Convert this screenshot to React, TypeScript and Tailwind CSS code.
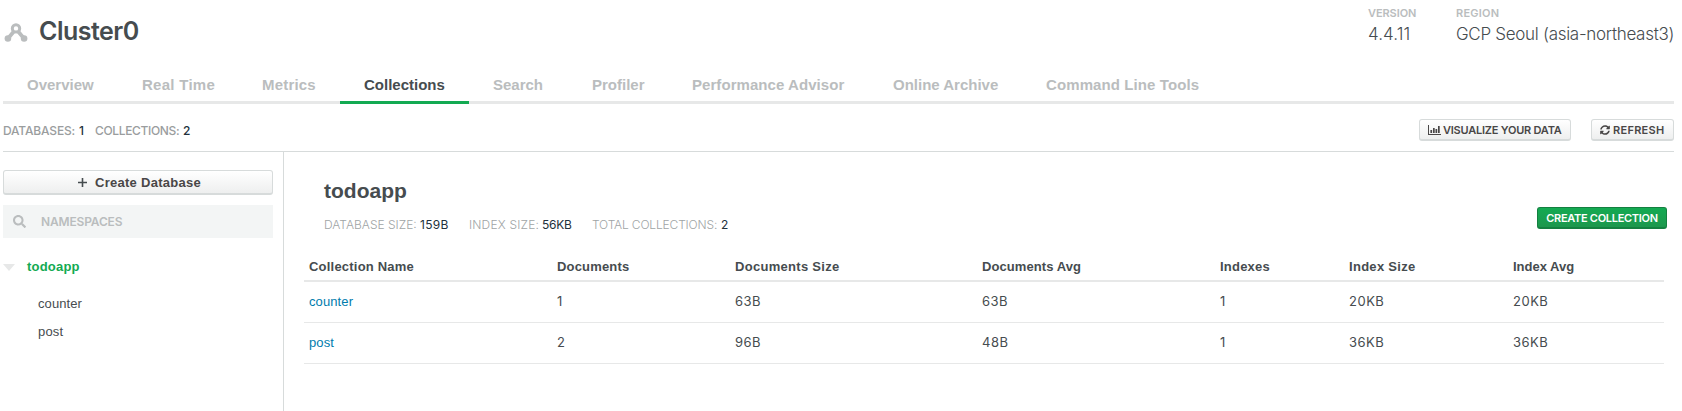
import type { ReactNode } from "react";
import { FaSearch, FaSyncAlt } from "react-icons/fa";

const tabs = [
  { label: "Overview", cls: "w-[115px]" },
  { label: "Real Time", cls: "w-[120px] tracking-[0.28px]" },
  { label: "Metrics", cls: "w-[102px] tracking-[0.19px]" },
  { label: "Collections", cls: "w-[129px]", active: true },
  { label: "Search", cls: "w-[99px]" },
  { label: "Profiler", cls: "w-[100px]" },
  { label: "Performance Advisor", cls: "w-[201px] tracking-[0.06px]" },
  { label: "Online Archive", cls: "w-[153px]" },
  { label: "Command Line Tools", cls: "w-[201px] tracking-[0.1px]" },
];

const headers = [
  { label: "Collection Name", cls: "tracking-[0.21px]" },
  { label: "Documents", cls: "tracking-[0.18px]" },
  { label: "Documents Size", cls: "tracking-[0.29px]" },
  { label: "Documents Avg", cls: "tracking-[0.08px]" },
  { label: "Indexes", cls: "tracking-[0.22px]" },
  { label: "Index Size", cls: "tracking-[0.29px]" },
  { label: "Index Avg", cls: "" },
];

const rows = [
  ["counter", "1", "63B", "63B", "1", "20KB", "20KB"],
  ["post", "2", "96B", "48B", "1", "36KB", "36KB"],
];

const columns = "grid grid-cols-[248px_178px_247px_238px_129px_164px_1fr]";

function ClusterIcon() {
  return (
    <svg width="24" height="19" viewBox="0 0 24 19" fill="none" stroke="#babdbe">
      <circle cx="12" cy="5.4" r="3.7" strokeWidth="3" />
      <path d="M9.8 8.6 L4 15.4 M14.2 8.6 L20 15.4" strokeWidth="3.8" />
      <circle cx="3.9" cy="15.5" r="3.3" fill="#babdbe" stroke="none" />
      <circle cx="20.1" cy="15.5" r="3.3" fill="#babdbe" stroke="none" />
    </svg>
  );
}

function ChartIcon() {
  return (
    <svg className="mt-px" width="13" height="11" viewBox="0 0 13 11" fill="#494747">
      <path d="M0 0h1v9h12v1H0z" />
      <path d="M2.4 5h1.7v3H2.4zM5 3h1.7v5H5zM7.5 4h1.7v4H7.5zM10 1h1.7v7H10z" />
    </svg>
  );
}

function GrayButton({ className, children }: { className: string; children: ReactNode }) {
  return (
    <button
      className={`flex items-center rounded-[3px] border border-[#d7dbdb] border-b-2 bg-gradient-to-b from-white to-[#eeefef] text-[#494747] ${className}`}
    >
      {children}
    </button>
  );
}

export default function App() {
  return (
    <div className="flex h-[411px] w-[1682px] flex-col overflow-hidden bg-white pr-2 pl-[3px] font-['Liberation_Sans',sans-serif] text-[#464c4f]">
      <header className="flex h-[60px] shrink-0 justify-between">
        <div className="flex pl-[1px]">
          <div className="pt-[23px]">
            <ClusterIcon />
          </div>
          <h1 className="pt-[14px] pl-[11px] font-['Inter',sans-serif] text-[25px] leading-[34px] font-semibold tracking-[-0.5px]">
            Cluster0
          </h1>
        </div>
        <div className="flex font-['Inter',sans-serif]">
          <div className="w-[88px]">
            <div className="mt-[5px] text-[11px] leading-4 font-semibold tracking-[-0.08px] text-[#babdbe]">VERSION</div>
            <div className="mt-[2px] text-[17px] leading-[22px] font-light tracking-[0.09px]">4.4.11</div>
          </div>
          <div className="w-[218px]">
            <div className="mt-[5px] text-[11px] leading-4 font-semibold tracking-[0.23px] text-[#babdbe]">REGION</div>
            <div className="mt-[2px] text-[17px] leading-[22px] font-light tracking-[-0.29px] whitespace-nowrap">
              GCP Seoul (asia-northeast3)
            </div>
          </div>
        </div>
      </header>

      <nav className="flex h-[44px] shrink-0 border-b-[3px] border-[#e7e8e8] text-[15px] leading-5 font-bold text-[#babdbe]">
        {tabs.map((t) => (
          <a
            key={t.label}
            className={`h-[44px] shrink-0 pt-[15px] pl-6 whitespace-nowrap ${t.cls} ${
              t.active ? "border-b-[3px] border-[#13aa52] text-[#464c4f]" : ""
            }`}
          >
            {t.label}
          </a>
        ))}
      </nav>

      <div className="flex h-12 shrink-0 items-start justify-between border-b border-[#d7dbdb] pt-[15px]">
        <div className="mt-[4px] flex font-['Inter',sans-serif] text-[12px] leading-4 font-medium text-[#9a9d9e]">
          <span className="w-[76px] tracking-[-0.17px]">DATABASES:</span>
          <span className="w-[16px] text-[#21313c]">1</span>
          <span className="w-[88px] tracking-[-0.34px]">COLLECTIONS:</span>
          <span className="text-[#21313c]">2</span>
        </div>
        <div className="flex gap-5 font-['Inter',sans-serif] text-[11px] font-semibold">
          <GrayButton className="h-[22px] w-[152px] pl-2">
            <ChartIcon />
            <span className="mt-px ml-[2px] tracking-[-0.22px] whitespace-nowrap">VISUALIZE YOUR DATA</span>
          </GrayButton>
          <GrayButton className="h-[22px] w-[83px] pl-2">
            <FaSyncAlt size={10} />
            <span className="mt-px ml-[3px] tracking-[0.28px]">REFRESH</span>
          </GrayButton>
        </div>
      </div>

      <div className="flex flex-1">
        <aside className="w-[281px] shrink-0 border-r border-[#d7dbdb] pt-[18px] pr-[10px]">
          <GrayButton className="h-[25px] w-full justify-center pt-px pl-[3px] text-[13px] font-bold">
            <svg width="9" height="9" viewBox="0 0 9 9" fill="#464c4f">
              <path d="M3.7 0h1.6v3.7H9v1.6H5.3V9H3.7V5.3H0V3.7h3.7z" />
            </svg>
            <span className="ml-2 tracking-[0.27px]">Create Database</span>
          </GrayButton>
          <div className="mt-[10px] flex h-[33px] items-center bg-[#f3f5f5] pl-[10px] text-[#babdbe]">
            <FaSearch size={13} />
            <span className="ml-[15px] font-['Inter',sans-serif] text-[12px] font-semibold tracking-[-0.16px]">
              NAMESPACES
            </span>
          </div>
          <div className="mt-[19px] flex items-center text-[13px] leading-5">
            <svg width="12" height="7" viewBox="0 0 12 7" fill="#e7e8e8">
              <path d="M0 0h12L6 7z" />
            </svg>
            <span className="ml-3 font-bold tracking-[0.2px] text-[#13aa52]">todoapp</span>
          </div>
          <div className="mt-[13px] pl-[35px] text-[13px] leading-[28px]">
            <div className="tracking-[0.08px]">counter</div>
            <div className="tracking-[0.18px]">post</div>
          </div>
        </aside>

        <main className="flex-1 pl-5">
          <div className="flex h-[106px] justify-between pr-[7px] pl-5">
            <div>
              <h2 className="mt-[26px] text-[21px] leading-[26px] font-bold">todoapp</h2>
              <div className="mt-[13px] flex font-['Inter',sans-serif] text-[12px] leading-4 font-light whitespace-nowrap text-[#a0a4a5]">
                <span className="w-[96px]">DATABASE SIZE:</span>
                <span className="w-[49px] font-normal tracking-[0.29px] text-[#21313c]">159B</span>
                <span className="w-[73px] tracking-[0.18px]">INDEX SIZE:</span>
                <span className="w-[50px] font-normal tracking-[-0.27px] text-[#21313c]">56KB</span>
                <span className="w-[129px] tracking-[-0.16px]">TOTAL COLLECTIONS:</span>
                <span className="font-normal text-[#21313c]">2</span>
              </div>
            </div>
            <button className="mt-[55px] flex h-[22px] w-[130px] items-center justify-center rounded-[3px] border border-b-2 border-[#148040] bg-gradient-to-b from-[#13aa52] to-[#1c974d] pt-px font-['Inter',sans-serif] text-[11px] font-semibold tracking-[-0.3px] whitespace-nowrap text-white">
              CREATE COLLECTION
            </button>
          </div>

          <div className="mr-[10px] text-[13px]">
            <div className={`${columns} h-6 border-b-2 border-[#e7e8e8] leading-5 font-bold`}>
              {headers.map((h) => (
                <div key={h.label} className={`-mt-px pl-[5px] whitespace-nowrap ${h.cls}`}>
                  {h.label}
                </div>
              ))}
            </div>
            {rows.map((r) => (
              <div key={r[0]} className={`${columns} h-[41px] border-b border-[#e7e8e8] pt-[9px] leading-5`}>
                {r.map((v, i) =>
                  i === 0 ? (
                    <a key={i} className="pt-px pl-[5px] tracking-[0.1px] text-[#007cad]">
                      {v}
                    </a>
                  ) : (
                    <div key={i} className="pl-[5px] font-['Inter',sans-serif] tracking-[0.5px]">
                      {v}
                    </div>
                  ),
                )}
              </div>
            ))}
          </div>
        </main>
      </div>
    </div>
  );
}
